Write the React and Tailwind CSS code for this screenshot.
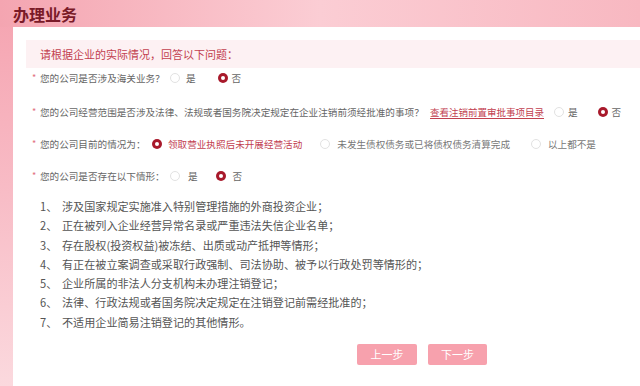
import React from "react";

const FONT = { fontFamily: '"Noto Sans CJK SC", "Noto Sans", sans-serif' };

function Radio({ checked, label, labelClass = "text-[#666]", ml = "ml-0", gap = "ml-[6px]" }) {
  return (
    <div className={`flex items-center shrink-0 ${ml}`}>
      {checked ? (
        <span className="w-[10px] h-[10px] rounded-full bg-[#a8192b] flex items-center justify-center shrink-0">
          <span className="w-[4px] h-[4px] rounded-full bg-white" />
        </span>
      ) : (
        <span className="w-[10px] h-[10px] rounded-full border border-[#e2e2e2] bg-white shrink-0" />
      )}
      <span className={`${gap} ${labelClass} whitespace-nowrap`}>{label}</span>
    </div>
  );
}

function Question({ text, width, children, mt }) {
  return (
    <div className={`flex items-center h-[20px] pl-[19px] text-[9.6px] text-[#666] ${mt}`}>
      <span className="text-[#e2707e] w-[8px] shrink-0 text-[9px]">*</span>
      <span className={`whitespace-nowrap shrink-0 ${width}`}>{text}</span>
      {children}
    </div>
  );
}

const items = [
  "涉及国家规定实施准入特别管理措施的外商投资企业；",
  "正在被列入企业经营异常名录或严重违法失信企业名单；",
  "存在股权(投资权益)被冻结、出质或动产抵押等情形；",
  "有正在被立案调查或采取行政强制、司法协助、被予以行政处罚等情形的；",
  "企业所属的非法人分支机构未办理注销登记；",
  "法律、行政法规或者国务院决定规定在注销登记前需经批准的；",
  "不适用企业简易注销登记的其他情形。",
];

export default function App() {
  return (
    <div
      style={FONT}
      className="w-[640px] h-[386px] overflow-hidden flex flex-col bg-gradient-to-b from-[#f5a3b0] via-[#f8bcc6] to-[#fbd9de]"
    >
      <div className="h-[27px] shrink-0 flex items-center pl-[13px] bg-gradient-to-r from-[#f4a5b1] via-[#fbcdd4] to-[#f8b8c1]">
        <span className="text-[16px] font-bold text-[#7a1a28] leading-none">办理业务</span>
      </div>
      <div className="flex-1 ml-[13px] bg-white pt-[13px] flex flex-col">
        <div className="ml-[13px] h-[28px] bg-[#fdf1f3] flex items-center pl-[14px]">
          <span className="text-[11px] text-[#c2404f]">请根据企业的实际情况，回答以下问题：</span>
        </div>

        <Question text="您的公司是否涉及海关业务？" width="w-[130px]" mt="mt-0">
          <Radio label="是" />
          <Radio checked label="否" ml="ml-[22px]" gap="ml-[4px]" />
        </Question>

        <Question text="您的公司经营范围是否涉及法律、法规或者国务院决定规定在企业注销前须经批准的事项？" width="w-[390px]" mt="mt-[14px]">
          <span className="w-[114px] shrink-0 text-[9.5px] text-[#c2404f] underline underline-offset-2 whitespace-nowrap">查看注销前置审批事项目录</span>
          <Radio label="是" ml="ml-[10px]" gap="ml-[4px]" />
          <Radio checked label="否" ml="ml-[20px]" gap="ml-[4px]" />
        </Question>

        <Question text="您的公司目前的情况为：" width="w-[112px]" mt="mt-[12px]">
          <Radio checked label="领取营业执照后未开展经营活动" labelClass="text-[#c2404f]" />
          <Radio label="未发生债权债务或已将债权债务清算完成" labelClass="text-[#777]" ml="ml-[18px]" gap="ml-[7px]" />
          <Radio label="以上都不是" labelClass="text-[#777]" ml="ml-[21px]" gap="ml-[7px]" />
        </Question>

        <Question text="您的公司是否存在以下情形：" width="w-[130px]" mt="mt-[12px]">
          <Radio label="是" gap="ml-[8px]" />
          <Radio checked label="否" ml="ml-[18px]" gap="ml-[7px]" />
        </Question>

        <div className="mt-[11px] pl-[27px] flex flex-col text-[11.1px] text-[#555] leading-[19.3px]">
          {items.map((t, i) => (
            <div key={i} className="flex whitespace-nowrap">
              <span className="w-[22px] shrink-0">{i + 1}、</span>
              <span>{t}</span>
            </div>
          ))}
        </div>

        <div className="mt-[12px] ml-[344px] flex gap-[11px]">
          <button className="w-[60px] h-[21px] rounded-[2px] bg-[#f7a1ad] text-white text-[11px] flex items-center justify-center">上一步</button>
          <button className="w-[59px] h-[21px] rounded-[2px] bg-[#f7a1ad] text-white text-[11px] flex items-center justify-center">下一步</button>
        </div>
      </div>
    </div>
  );
}
